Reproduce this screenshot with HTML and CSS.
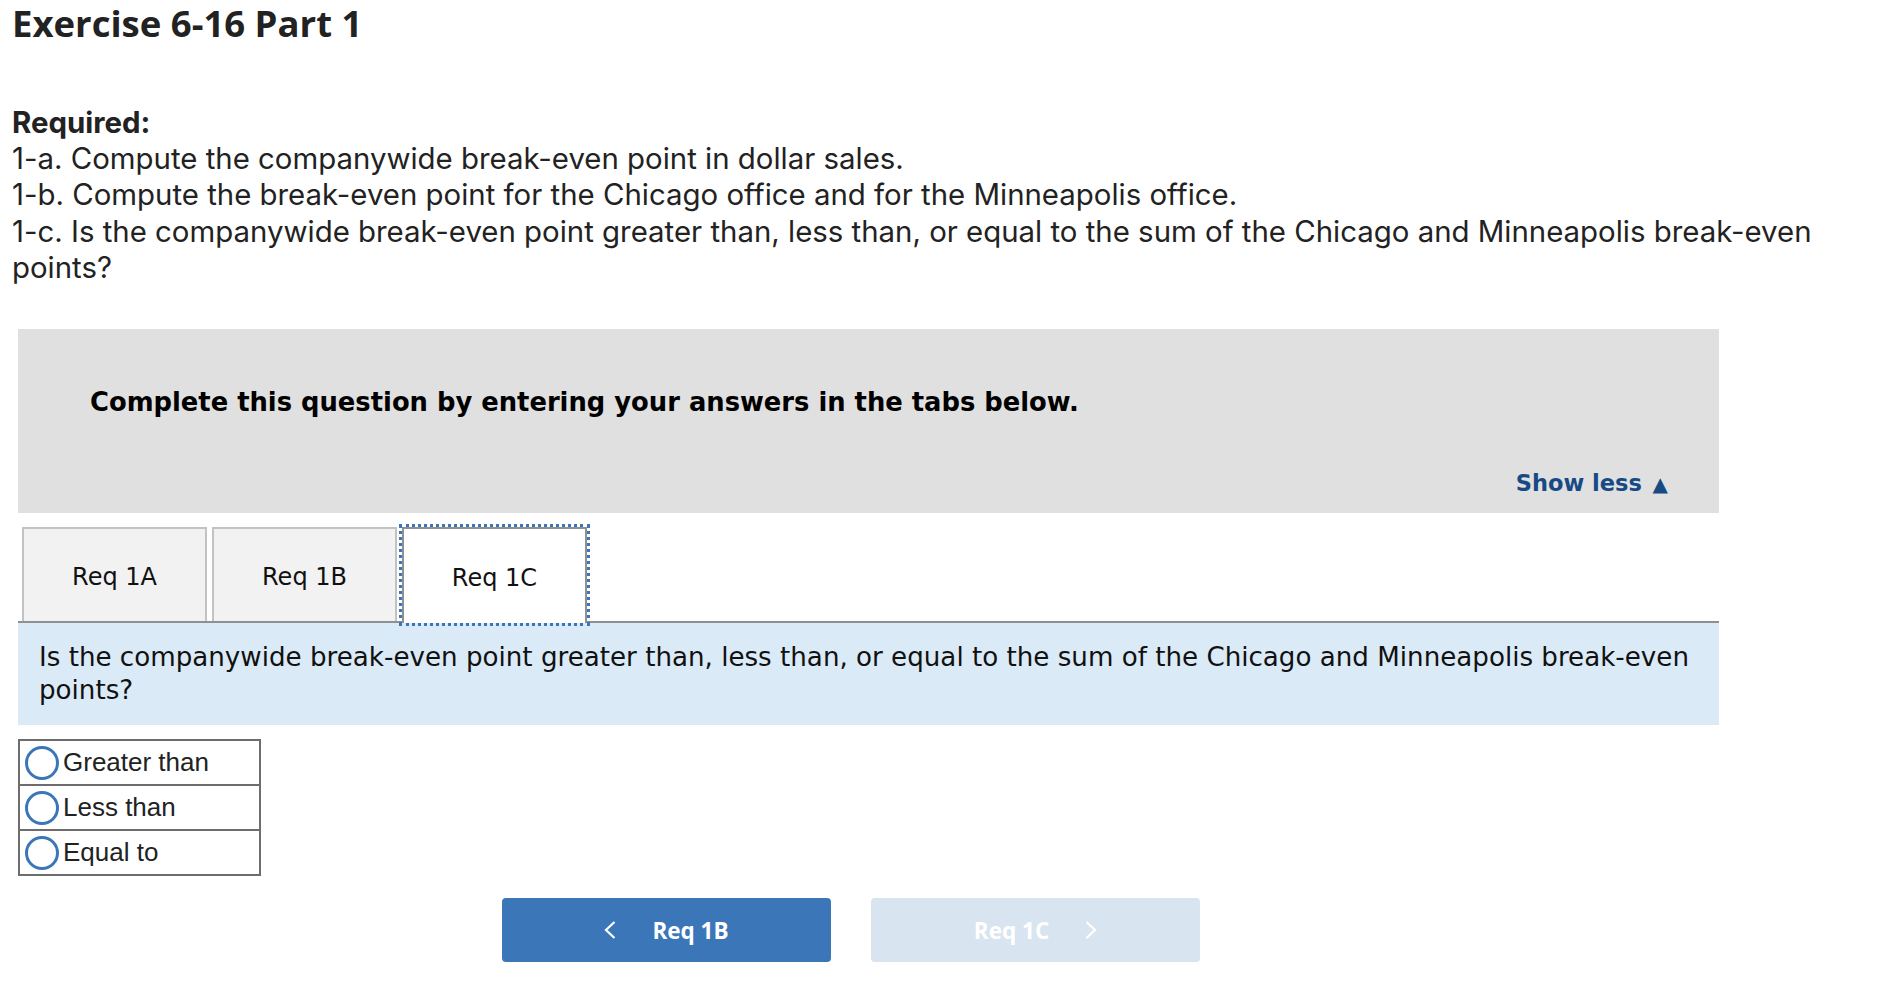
FILE: index.html
```html
<!DOCTYPE html>
<html>
<head>
<meta charset="utf-8">
<link rel="stylesheet" href="styles.css">
</head>
<body>
<h1 class="title">Exercise 6-16 Part 1</h1>
<div class="required">
  <div class="req-head">Required:</div>
  <div>1-a. Compute the companywide break-even point in dollar sales.</div>
  <div>1-b. Compute the break-even point for the Chicago office and for the Minneapolis office.</div>
  <div>1-c. Is the companywide break-even point greater than, less than, or equal to the sum of the Chicago and Minneapolis break-even points?</div>
</div>
<div class="panel">
  <div class="instructions">
    <div class="instr-text">Complete this question by entering your answers in the tabs below.</div>
    <div class="show-less">Show less <span class="tri">&#9650;</span></div>
  </div>
  <div class="tabs">
    <div class="tab">Req 1A</div>
    <div class="tab">Req 1B</div>
    <div class="tab active">Req 1C</div>
  </div>
  <div class="question">Is the companywide break-even point greater than, less than, or equal to the sum of the Chicago and Minneapolis break-even points?</div>
  <div class="options">
    <div class="option"><span class="radio"></span>Greater than</div>
    <div class="option"><span class="radio"></span>Less than</div>
    <div class="option"><span class="radio"></span>Equal to</div>
  </div>
  <div class="nav">
    <div class="btn prev"><svg class="chev" width="12" height="18" viewBox="0 0 12 18"><path d="M10.5 1 L2 9 L10.5 17" fill="none" stroke="#fff" stroke-width="2.2"/></svg><span>Req 1B</span></div>
    <div class="btn next disabled"><span>Req 1C</span><svg class="chev" width="12" height="18" viewBox="0 0 12 18"><path d="M1.5 1 L10 9 L1.5 17" fill="none" stroke="#fff" stroke-width="2.2"/></svg></div>
  </div>
</div>
</body>
</html>
```
FILE: styles.css
```css
html, body {
  margin: 0;
  padding: 0;
  background: #fff;
}
body {
  padding: 0 12px;
  font-family: Inter, "Open Sans", sans-serif;
  color: #222;
}
.title {
  margin: 0;
  padding-top: 1px;
  font-family: "Open Sans", sans-serif;
  font-size: 36.5px;
  line-height: 44px;
  font-weight: 700;
  color: #222;
}
.required {
  margin-top: 60px;
  font-size: 29.4px;
  line-height: 36.2px;
}
.req-head {
  font-weight: 700;
}
.panel {
  margin-top: 43px;
  margin-left: 6px;
  width: 1701px;
}
.instructions {
  background: #e0e0e0;
  height: 184px;
  box-sizing: border-box;
  padding: 56px 51px 0 72px;
  display: flex;
  flex-direction: column;
}
.instr-text {
  font-family: "DejaVu Sans", sans-serif;
  font-weight: 700;
  font-size: 25.8px;
  line-height: 34px;
  color: #000;
}
.show-less {
  margin-top: auto;
  margin-bottom: 15px;
  align-self: flex-end;
  font-family: "DejaVu Sans", sans-serif;
  font-weight: 700;
  font-size: 22.5px;
  line-height: 28px;
  color: #174a84;
}
.tri {
  font-size: 20px;
  margin-left: 3px;
}
.tabs {
  display: flex;
  gap: 5px;
  margin-top: 14px;
  padding-left: 4px;
  border-bottom: 2px solid #909090;
}
.tab {
  width: 185px;
  height: 94px;
  box-sizing: border-box;
  background: #f2f2f2;
  border: 2px solid #c2c2c2;
  border-bottom: none;
  display: flex;
  align-items: center;
  justify-content: center;
  padding-top: 4px;
  font-family: "DejaVu Sans", sans-serif;
  font-size: 24px;
  color: #111;
}
.tab.active {
  background: #fff;
  border-color: #909090;
  outline: 3px dotted #3b76b8;
  outline-offset: 0;
  margin-bottom: -2px;
  height: 96px;
}
.question {
  background: #dbeaf7;
  padding: 18px 21px 18px 21px;
  font-family: "DejaVu Sans", sans-serif;
  font-size: 26.15px;
  line-height: 33px;
  color: #111;
}
.options {
  margin-top: 14px;
  width: 243px;
  border: 2px solid #6d6d6d;
  box-sizing: border-box;
}
.option {
  height: 43px;
  display: flex;
  align-items: center;
  font-family: "Liberation Sans", Arial, sans-serif;
  font-size: 26px;
  color: #222;
  padding-left: 5px;
}
.option + .option {
  border-top: 2px solid #6d6d6d;
}
.radio {
  width: 28px;
  height: 28px;
  border: 3.5px solid #3b76b8;
  border-radius: 50%;
  margin-right: 4px;
  flex: none;
}
.nav {
  display: flex;
  gap: 40px;
  margin-top: 22px;
  padding-left: 484px;
}
.btn {
  width: 329px;
  height: 64px;
  border-radius: 4px;
  background: #3b76b8;
  color: #fff;
  display: flex;
  align-items: center;
  justify-content: center;
  gap: 36px;
  font-family: "Open Sans", sans-serif;
  font-weight: 700;
  font-size: 22.5px;
}
.btn.disabled {
  background: #d9e4f1;
}
.chev {
  display: block;
}
```
